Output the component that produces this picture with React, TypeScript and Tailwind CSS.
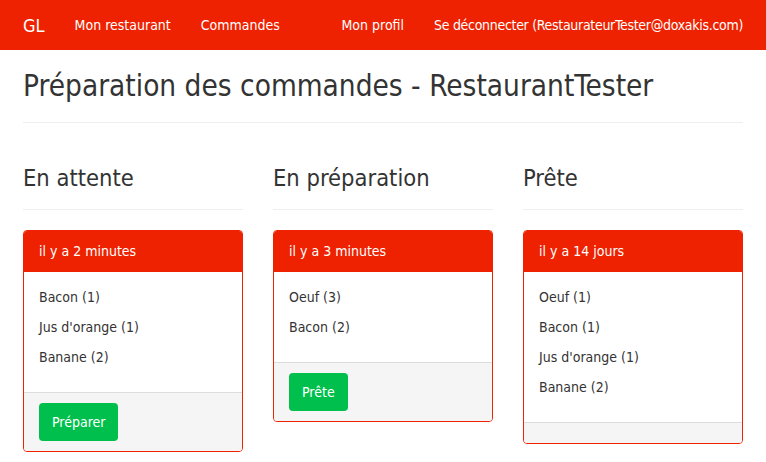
import React from 'react'

type Order = {
  when: string
  items: string[]
  action?: string
}

const columns: { title: string; order: Order }[] = [
  {
    title: 'En attente',
    order: { when: 'il y a 2 minutes', items: ['Bacon (1)', "Jus d'orange (1)", 'Banane (2)'], action: 'Préparer' },
  },
  {
    title: 'En préparation',
    order: { when: 'il y a 3 minutes', items: ['Oeuf (3)', 'Bacon (2)'], action: 'Prête' },
  },
  {
    title: 'Prête',
    order: { when: 'il y a 14 jours', items: ['Oeuf (1)', 'Bacon (1)', "Jus d'orange (1)", 'Banane (2)'] },
  },
]

const OrderPanel = ({ order }: { order: Order }) => {
  return (
    <div className="border border-[#ee2200] rounded-[4px] overflow-hidden bg-white">
      <div className="bg-[#ee2200] text-white text-[14px] h-[41px] px-[15px] flex items-center">
        {order.when}
      </div>
      <div className="px-[15px] pt-[15px] pb-[15px] text-[14px] text-[#333]">
        {order.items.map((item) => (
          <p key={item} className="leading-[20px] mb-[10px]">
            {item}
          </p>
        ))}
      </div>
      <div className="bg-[#f5f5f5] border-t border-[#ddd] px-[15px] py-[10px]">
        {order.action && (
          <button className="bg-[#00bf4d] text-white text-[14px] h-[38px] px-[13px] rounded-[4px]">
            {order.action}
          </button>
        )}
      </div>
    </div>
  )
}

export default function App() {
  return (
    <div className="min-h-[462px] bg-white text-[#333] font-['DejaVu_Sans_Condensed','DejaVu_Sans',sans-serif]">
      {/* Navbar */}
      <nav className="bg-[#ee2200] h-[50px]">
        <div className="w-[750px] mx-auto px-[15px] h-full flex items-center justify-between text-white">
          <div className="flex items-center">
            <span className="text-[18px] mr-[15px]">GL</span>
            <a className="text-[14px] px-[15px]">Mon restaurant</a>
            <a className="text-[14px] px-[15px]">Commandes</a>
          </div>
          <div className="flex items-center -mr-[15px]">
            <a className="text-[14px] px-[15px]">Mon profil</a>
            <a className="text-[14px] tracking-[-0.3px] px-[15px]">Se déconnecter (RestaurateurTester@doxakis.com)</a>
          </div>
        </div>
      </nav>

      <div className="w-[750px] mx-auto px-[15px]">
        <h1 className="text-[29.5px] leading-[33px] pt-[20px] pb-[19px] border-b border-[#eee]">
          Préparation des commandes - RestaurantTester
        </h1>

        <div className="grid grid-cols-3 gap-[30px] mt-[40px]">
          {columns.map((col) => (
            <div key={col.title}>
              <h3 className="text-[23.5px] leading-[26px] pt-[2px] pb-[18px] border-b border-[#eee] mb-[20px]">
                {col.title}
              </h3>
              <OrderPanel order={col.order} />
            </div>
          ))}
        </div>
      </div>
    </div>
  )
}
